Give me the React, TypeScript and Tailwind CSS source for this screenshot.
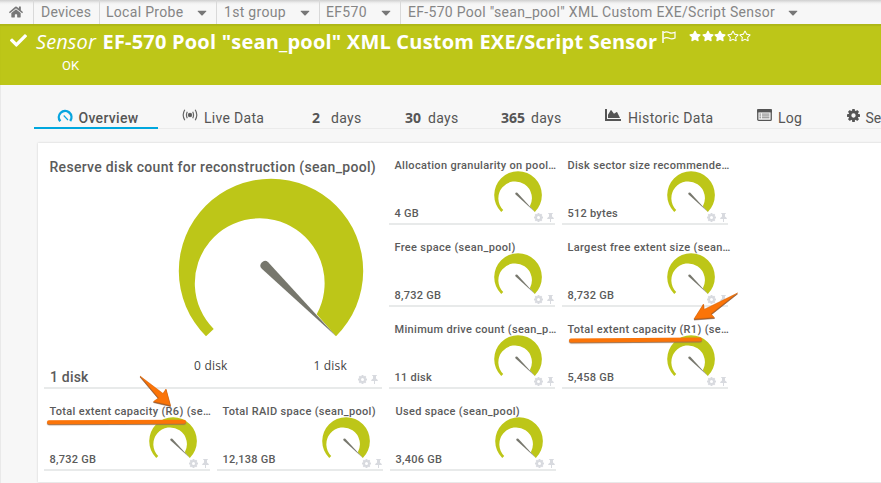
import React from 'react';
import { FaHome, FaCaretDown, FaCheck, FaStar, FaRegStar, FaChartArea } from 'react-icons/fa';

const ROBOTO = "font-['Roboto','Liberation_Sans',sans-serif]";
const OPEN = "font-['Open_Sans','Noto_Sans',sans-serif]";

function Gear({ className = '' }: { className?: string }) {
  return (
    <svg viewBox="0 0 24 24" className={`shrink-0 ${className}`} fill="currentColor">
      {[0, 45, 90, 135].map((a) => (
        <g key={a} transform={`rotate(${a} 12 12)`}>
          <rect x="9.4" y="0" width="5.2" height="6" rx=".8" />
          <rect x="9.4" y="18" width="5.2" height="6" rx=".8" />
        </g>
      ))}
      <circle cx="12" cy="12" r="6.6" fill="none" stroke="currentColor" strokeWidth="5.2" />
    </svg>
  );
}

function Pin({ className = '' }: { className?: string }) {
  return (
    <svg viewBox="0 0 14 18" className={className} fill="currentColor">
      <path d="M2.5 0h9v2.2H10v5l3.5 2.8v1.8H8v6H6v-6H.5V10L4 7.200V2.200H2.500Z" />
    </svg>
  );
}

function Gauge({ className = '' }: { className?: string }) {
  return (
    <svg viewBox="0 0 186 160" className={`shrink-0 ${className}`}>
      <path
        d="M28 158.3A92.2 92.2 0 1 1 158 158.3L138.7 136.3A64.9 64.9 0 1 0 35.7 151Z"
        fill="#bdc618"
      />
      <path d="M90.2 84.2L158.3 158.6L83.8 90.8A4.6 4.6 0 0 1 90.2 84.2Z" fill="#77776d" />
    </svg>
  );
}

function Tools({ className = '' }: { className?: string }) {
  return (
    <div className={`absolute flex items-center text-[#d8dadf] ${className}`}>
      <Gear className="size-[9px]" />
      <Pin className="ml-[4px] h-[9px] w-[7px]" />
    </div>
  );
}

function Channel({ title, value }: { title: string; value: string }) {
  return (
    <div className="relative flex h-[82px] w-[166px] flex-col border-b-2 border-[#e8eaea] pl-[5.5px]">
      <div className="h-7 pt-[15px] text-[11px] leading-[15px] font-medium tracking-[0.32px] whitespace-nowrap">{title}</div>
      <div className="flex justify-between pr-[13px]">
        <div className="pt-[35px] text-[11px] leading-[15px] font-medium tracking-[0.25px]">{value}</div>
        <Gauge className="h-[41.4px] w-[48.1px]" />
      </div>
      <Tools className="right-[1px] bottom-[1px]" />
    </div>
  );
}

function Crumb({ label, width, text, caret = true }: { label: string; width: string; text: string; caret?: boolean }) {
  return (
    <div className={`flex h-full shrink-0 items-center border-l border-[#d9d9d9] ${width}`}>
      <span className={`pt-px whitespace-nowrap ${text}`}>{label}</span>
      {caret && <FaCaretDown className="mr-[9px] ml-auto h-[15px] w-[10px] text-[#777]" />}
    </div>
  );
}

function Header() {
  return (
    <header className={`h-[61px] bg-[#bdc618] text-white shadow-[inset_0_2px_1px_#aeb717] ${OPEN}`}>
      <div className="flex h-[33px] pl-[10px]">
        <FaCheck className="mt-[8px] size-[17px]" />
        <h1 className="ml-[9px] flex shrink-0 pt-[3px] text-[20px] leading-[29px] whitespace-nowrap">
          <em className="w-[66.5px] tracking-[0.1px]">Sensor</em>
          <span className="w-[559px] font-bold tracking-[0.2px]">EF-570 Pool "sean_pool" XML Custom EXE/Script Sensor</span>
        </h1>
        <svg viewBox="0 0 14 12" className="mt-[7px] h-[12px] w-[14px] shrink-0" fill="none" stroke="white">
          <path d="M1 0V12" strokeWidth="1.5" />
          <path d="M1.500 1.700Q4.500 0 7.300 1.600Q9.800 2.700 13 1.200V7Q9.800 8.500 7.300 7.200Q4.500 5.800 1.500 7.500" strokeWidth="1.2" />
        </svg>
        <div className="mt-[6px] ml-[13.5px] flex h-[12px] items-center gap-[0.6px]">
          <FaStar className="size-[12px]" />
          <FaStar className="size-[12px]" />
          <FaStar className="size-[12px]" />
          <FaRegStar className="size-[12px]" />
          <FaRegStar className="size-[12px]" />
        </div>
      </div>
      <div className={`pl-[62px] text-[13px] leading-[17px] ${ROBOTO}`}>OK</div>
    </header>
  );
}

function Tabs() {
  return (
    <nav className="ml-[34px] flex h-[44px] items-end border-b border-[#ebebeb] text-[14px] whitespace-nowrap text-[#555]">
      <div className="-mb-px flex h-[26px] w-[124px] shrink-0 border-b-2 border-[#00a7de] pl-[23px] font-medium">
        <svg viewBox="0 0 16 14" className="mt-[6px] h-[14px] w-[16px] shrink-0" fill="none" stroke="#08a5df">
          <path d="M3.3 12.3A6.3 6.3 0 1 1 13.2 12" strokeWidth="2.4" />
          <path d="M6.700 6.500L11 11" strokeWidth="1.1" />
        </svg>
        <span className="ml-[5.5px] pt-[5px] leading-[20px] tracking-[0.3px]">Overview</span>
      </div>
      <div className="flex h-[25px] w-[153px] shrink-0 pl-[23.5px]">
        <svg viewBox="0 0 16 12" className="mt-[6px] h-[12px] w-[16px]" fill="none" stroke="#666" strokeWidth="1.2">
          <circle cx="8" cy="6" r="1.6" fill="#555" />
          <path d="M5.3 2.8Q3.6 6 5.3 9.2M10.7 2.8Q12.4 6 10.7 9.2M2.8 .8Q-.4 6 2.8 11.2M13.2 .8Q16.4 6 13.2 11.2" />
        </svg>
        <span className="ml-[6.5px] pt-[5px] leading-[20px] tracking-[0.3px]">Live Data</span>
      </div>
      {[
        { n: '2', unit: 'w-[19px]', w: 'w-[93px]' },
        { n: '30', unit: 'w-[23px]', w: 'w-[96px]' },
        { n: '365', unit: 'w-[30px]', w: 'w-[104px]' },
      ].map((d) => (
        <div key={d.n} className={`flex h-[25px] shrink-0 pt-[5px] pl-px leading-[20px] ${d.w}`}>
          <b className={`${OPEN} ${d.unit}`}>{d.n}</b>
          <span className="tracking-[0.3px]">days</span>
        </div>
      ))}
      <div className="flex h-[25px] w-[152px] shrink-0">
        <FaChartArea className="mt-[4px] h-[16px] w-[18px]" />
        <span className="ml-[6px] pt-[5px] leading-[20px] tracking-[0.35px]">Historic Data</span>
      </div>
      <div className="flex h-[25px] w-[90px] shrink-0 pl-px">
        <svg viewBox="0 0 16 13" className="mt-[6px] h-[12px] w-[15px] shrink-0">
          <rect x=".7" y=".7" width="14.6" height="11.6" rx="1" fill="#f7f7f7" stroke="#555" strokeWidth="1.4" />
          <path d="M0 2h16" stroke="#555" strokeWidth="3.4" />
          <path d="M2.5 5.5h1.8M5.3 5.5h8M2.5 7.5h1.8M5.3 7.5h8M2.5 9.5h1.8M5.3 9.5h8" stroke="#777" />
        </svg>
        <span className="ml-[6px] pt-[5px] leading-[20px] tracking-[0.3px]">Log</span>
      </div>
      <div className="flex h-[25px] shrink-0">
        <Gear className="mt-[6px] ml-px size-[13px]" />
        <span className="ml-[5.5px] pt-[5px] leading-[20px]">Settings</span>
      </div>
    </nav>
  );
}

function Arrow({ className, flip }: { className: string; flip?: boolean }) {
  return (
    <svg className={`absolute overflow-visible drop-shadow-[0_1px_0.5px_#8a5a3a] ${className}`} viewBox={flip ? '0 0 44 28' : '0 0 32 31'} fill="#fb7408">
      {flip ? (
        <path d="M43.5 1L17 22L20.5 25.5L0 27L9.5 12L10 17.5Z" stroke="#d96508" strokeWidth=".6" />
      ) : (
        <path d="M0 0L23 17.5L26 13L30.5 29.5L13.5 25.5L18.5 22Z" stroke="#d96508" strokeWidth=".6" />
      )}
    </svg>
  );
}

export default function App() {
  return (
    <div className={`relative h-[483px] w-[881px] overflow-hidden bg-[#f7f7f7] text-[#5b5b5b] shadow-[inset_1px_0_0_#e9e9e9] ${ROBOTO}`}>
      <div className="flex h-[24px] bg-[linear-gradient(#cfcfcf,#f0f0f0_3px,#f7f7f7_5px)] text-[14px] text-[#858585]">
        <div className="flex w-[33px] shrink-0 items-center pl-[9px]">
          <FaHome className="size-[14px] text-[#777]" />
        </div>
        <Crumb label="Devices" width="w-[66px] pl-[7px]" text="tracking-[0.2px]" caret={false} />
        <Crumb label="Local Probe" width="w-[117px] pl-[6px]" text="tracking-[0.3px]" />
        <Crumb label="1st group" width="w-[103px] pl-[7px]" text="tracking-[0.3px]" />
        <Crumb label="EF570" width="w-[81px] pl-[6px]" text="tracking-[0.3px]" />
        <Crumb label={'EF-570 Pool "sean_pool" XML Custom EXE/Script Sensor'} width="w-[407px] pl-[7px]" text="tracking-[0.3px]" />
      </div>
      <Header />
      <Tabs />
      <main className="mt-[14px] ml-[38px] h-[339px] w-[860px] bg-white pl-[6px] shadow-[0_0_2px_#ccc]">
        <div className="flex">
          <section className="relative mr-[7px] flex h-[246px] w-[338px] flex-col border-b-2 border-[#e8eaea]">
            <h2 className="h-[35px] shrink-0 pt-[14px] pl-[5.5px] text-[14px] leading-[20px] font-medium tracking-[0.3px] whitespace-nowrap">
              Reserve disk count for reconstruction (sean_pool)
            </h2>
            <Gauge className="ml-[134px] h-[160px] w-[186px]" />
            <div className={`flex justify-between pt-[18px] pr-[35px] pl-[150px] text-[12px] leading-[20px] tracking-[0.2px] whitespace-nowrap text-[#444] ${OPEN}`}>
              <span>0 disk</span>
              <span>1 disk</span>
            </div>
            <div className="absolute bottom-[1px] left-[6px] text-[14px] leading-[18px] font-medium tracking-[0.2px]">1 disk</div>
            <Tools className="right-[4px] bottom-[3px]" />
          </section>
          <section className="grid grid-cols-2 gap-x-[7px]">
            <Channel title="Allocation granularity on pool…" value="4 GB" />
            <Channel title="Disk sector size recommende…" value="512 bytes" />
            <Channel title="Free space (sean_pool)" value="8,732 GB" />
            <Channel title="Largest free extent size (sean…" value="8,732 GB" />
            <Channel title="Minimum drive count (sean_p…" value="11 disk" />
            <Channel title="Total extent capacity (R1) (se…" value="5,458 GB" />
          </section>
        </div>
        <section className="flex gap-[7px]">
          <Channel title="Total extent capacity (R6) (se…" value="8,732 GB" />
          <Channel title="Total RAID space (sean_pool)" value="12,138 GB" />
          <Channel title="Used space (sean_pool)" value="3,406 GB" />
        </section>
      </main>
      <div className="absolute top-[338px] left-[569px] h-[4px] w-[133px] rotate-[-0.4deg] rounded-full bg-[#fb7408] shadow-[0_1px_1px_#99704f]" />
      <div className="absolute top-[420px] left-[47px] h-[4px] w-[139px] rotate-[-0.2deg] rounded-full bg-[#fb7408] shadow-[0_1px_1px_#99704f]" />
      <Arrow flip className="top-[292px] left-[694px] h-[28px] w-[44px]" />
      <Arrow className="top-[376px] left-[140px] h-[31px] w-[32px]" />
    </div>
  );
}
